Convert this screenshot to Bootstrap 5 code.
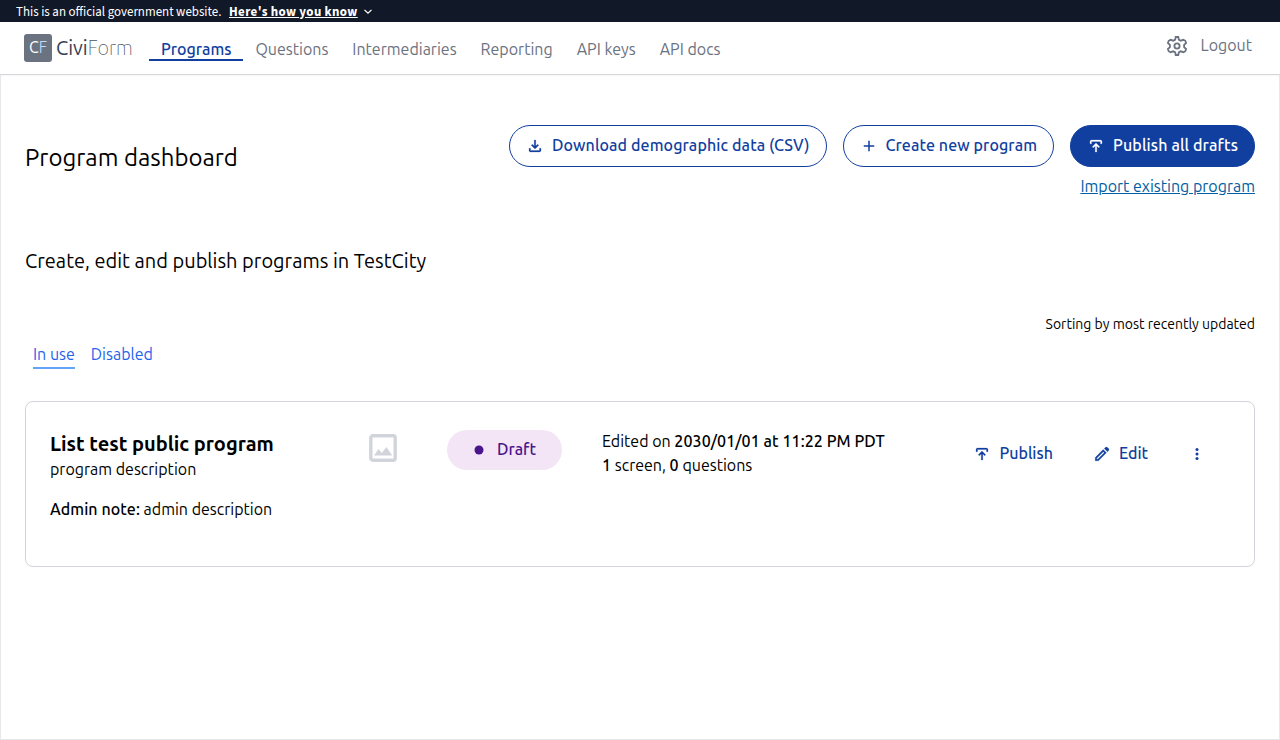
<!DOCTYPE html>
<html lang="en">
<head>
<meta charset="utf-8">
<meta name="viewport" content="width=device-width, initial-scale=1">
<title>CiviForm - Program dashboard</title>
<link rel="stylesheet" href="https://cdn.jsdelivr.net/npm/bootstrap@5.3.0/dist/css/bootstrap.min.css">
<style>
  body { font-family: Ubuntu, "Noto Sans", sans-serif; font-size: 16px; line-height: 24px; color: #000; min-height: 740px; }
  svg { display: block; flex: none; }
  .gov-banner { height: 22px; padding-top: 2px; background: #111827; color: #fff; font: 12.95px/21px "Source Sans 3", "Noto Sans", sans-serif; }
  .gov-banner a { color: #fff; font-weight: 700; letter-spacing: .38px; text-underline-offset: 1px; margin-left: 7.6px; }
  .site-header { height: 52px; box-shadow: 0 1px 2px rgba(0,0,0,.1); position: relative; }
  .brand-mark { width: 28px; height: 28px; border-radius: 3px; background: #6b7280; color: #fff; font-size: 16px; font-weight: 400; line-height: 27px; }
  .brand-mark span { color: #bfdbfe; font-weight: 300; }
  .brand-name { font-size: 20px; font-weight: 400; line-height: 28px; color: #374151; }
  .brand-name span { color: #4b5563; font-weight: 100; letter-spacing: -.1px; }
  .site-nav { margin-left: 16.3px; }
  .site-nav .nav-link { padding: 0 12px; height: 23px; line-height: 22px; color: #6b7280; border-bottom: 2px solid transparent; }
  .site-nav .nav-link.active { color: #113f9f; font-weight: 500; border-color: #113f9f; }
  .gear { margin-top: 12px; }
  .logout { color: #6b7280; margin-top: 11px; }
  main { border: 1px solid #e5e7eb; padding: 50px 24px 0; }
  .pill { height: 42px; padding: 0 16px 2px; border: 1px solid #113f9f; border-radius: 21px; color: #113f9f; font-weight: 500; letter-spacing: .1px; line-height: 24px; gap: 8px; }
  .pill:hover { background: #e5edff; color: #113f9f; }
  .pill.create { letter-spacing: .08px; }
  .pill.filled { background: #113f9f; color: #fff; letter-spacing: .13px; }
  .pill svg { margin-top: 2px; }
  h1 { font-size: 24px; line-height: 32px; font-weight: 400; margin-top: 17px; }
  .import-link { color: #005ea2; margin-top: 7px; }
  .lead-in { font-size: 20px; line-height: 28px; margin-top: 49px; }
  .sorting { font-size: 14px; line-height: 20px; margin-top: 39px; }
  .tabs { margin-top: 8px; }
  .tab-link { color: #2563eb; text-decoration: none; height: 27px; border-bottom: 2px solid transparent; }
  .tab-link.active { border-color: #60a5fa; }
  .program-card { height: 166px; margin-top: 32px; border: 1px solid #d1d5db; border-radius: 8px; padding: 0 24px; }
  .program-info { width: 318px; padding-top: 28px; }
  .program-info h2 { font-size: 20px; line-height: 28px; font-weight: 600; margin-bottom: -1px; }
  .strong { font-weight: 500; letter-spacing: .07px; }
  .thumb { margin: 32px 0 0 1px; }
  .draft-pill { width: 115px; height: 40px; margin: 28px 0 0 50px; border-radius: 20px; background: #f3e5f5; color: #4a148c; gap: 13px; padding: 0 0 2px 27px; font-weight: 500; }
  .draft-pill svg { margin-top: 2px; }
  .edited { width: 371px; margin-left: 40px; padding-top: 27px; }
  .row-action { color: #113f9f; font-weight: 500; text-decoration: none; gap: 8.4px; height: 24px; margin-top: 39px; }
  .row-action svg { margin-top: 1px; }
  .row-action + .row-action { margin-left: 39.6px; }
</style>
</head>
<body class="d-flex flex-column">
<div class="gov-banner d-flex align-items-center px-3">
  <span>This is an official government website.</span>
  <a href="#">Here's how you know</a>
  <svg class="ms-1" width="12" height="12" viewBox="0 0 12 12" fill="none" stroke="#fff" stroke-width="1.3"><path d="M2.5 3.9 6 7.2l3.5-3.3"/></svg>
</div>
<header class="site-header d-flex bg-white">
  <a href="#" class="d-flex text-decoration-none ms-4 mt-2 pt-1">
    <span class="brand-mark text-center">C<span>F</span></span>
    <span class="brand-name ms-1">Civi<span>Form</span></span>
  </a>
  <nav class="site-nav nav mt-3">
    <a class="nav-link active" href="#">Programs</a>
    <a class="nav-link" href="#">Questions</a>
    <a class="nav-link" href="#">Intermediaries</a>
    <a class="nav-link" href="#">Reporting</a>
    <a class="nav-link" href="#">API keys</a>
    <a class="nav-link" href="#">API docs</a>
  </nav>
  <div class="d-flex align-items-start ms-auto pe-4 me-1">
    <svg class="gear" width="24" height="24" viewBox="0 0 24 24" fill="none" stroke="#6b7280" stroke-width="1.8" stroke-linejoin="miter"><path d="M10.2 5.6 10.7 3h2.6l.5 2.6 1.9 1.1 2.7-.9 1.9 1 .8 2.2-2 1.9v2.2l2 1.9-.8 2.2-1.9 1-2.7-.9-1.9 1.1-.5 2.6h-2.6l-.5-2.6-1.9-1.1-2.7.9-1.9-1-.8-2.2 2-1.9v-2.2l-2-1.9.8-2.2 1.9-1 2.7.9Z"/><circle cx="12" cy="12" r="2.6"/></svg>
    <a href="#" class="logout text-decoration-none ps-1 ms-2">Logout</a>
  </div>
</header>
<main class="flex-grow-1">
  <div class="d-flex">
    <h1 class="mb-0 me-auto">Program dashboard</h1>
    <div class="d-flex flex-column align-items-end">
      <div class="d-flex gap-3">
        <button class="btn pill d-flex align-items-center"><svg width="18" height="18" viewBox="0 0 24 24" fill="currentColor"><path d="M12 16 7 11l1.4-1.45L11 12.15V4h2v8.15l2.6-2.6L17 11ZM6 20q-.82 0-1.41-.59T4 18v-3h2v3h12v-3h2v3q0 .82-.59 1.41T18 20Z" stroke="currentColor" stroke-width=".3"/></svg>Download demographic data (CSV)</button>
        <button class="btn pill create d-flex align-items-center"><svg width="18" height="18" viewBox="0 0 24 24" fill="currentColor"><path d="M19 13h-6v6h-2v-6H5v-2h6V5h2v6h6v2Z"/></svg>Create new program</button>
        <button class="btn pill filled d-flex align-items-center"><svg width="18" height="18" viewBox="0 0 24 24" fill="currentColor"><path d="M11 20v-8.15l-2.6 2.6L7 13l5-5 5 5-1.4 1.45-2.6-2.6V20ZM4 9V6q0-.82.59-1.41T6 4h12q.82 0 1.41.59T20 6v3h-2V6H6v3Z" stroke="currentColor" stroke-width=".3"/></svg>Publish all drafts</button>
      </div>
      <a href="#" class="import-link">Import existing program</a>
    </div>
  </div>
  <p class="lead-in mb-0">Create, edit and publish programs in TestCity</p>
  <p class="sorting mb-0 text-end">Sorting by most recently updated</p>
  <div class="tabs d-flex gap-3 ps-2">
    <a href="#" class="tab-link active">In use</a>
    <a href="#" class="tab-link">Disabled</a>
  </div>
  <section class="program-card d-flex align-items-start">
    <div class="program-info">
      <h2>List test public program</h2>
      <p class="mb-3">program description</p>
      <p class="mb-0"><span class="strong">Admin note:</span> admin description</p>
    </div>
    <svg class="thumb" width="28" height="28" viewBox="0 0 28 28"><rect x="1.8" y="1.8" width="24.4" height="24.4" rx="2" fill="none" stroke="#d1d5db" stroke-width="3.4"/><path d="m5 21.5 4.5-6.5 3.3 4.1 4.6-6.1 5.9 8.5Z" fill="#d1d5db"/></svg>
    <div class="draft-pill d-flex align-items-center"><svg width="10" height="10"><circle cx="5" cy="5" r="4.5" fill="#4a148c"/></svg>Draft</div>
    <div class="edited">Edited on <span class="strong">2030/01/01 at 11:22 PM PDT</span><br><span class="strong">1</span> screen, <span class="strong">0</span> questions</div>
    <a href="#" class="row-action d-flex align-items-center"><svg width="18" height="18" viewBox="0 0 24 24" fill="currentColor"><path d="M11 20v-8.15l-2.6 2.6L7 13l5-5 5 5-1.4 1.45-2.6-2.6V20ZM4 9V6q0-.82.59-1.41T6 4h12q.82 0 1.41.59T20 6v3h-2V6H6v3Z" stroke="currentColor" stroke-width=".3"/></svg>Publish</a>
    <a href="#" class="row-action d-flex align-items-center"><svg width="18" height="18" viewBox="0 0 24 24" fill="currentColor"><path d="M5 19h1.4l8.63-8.63-1.4-1.4L5 17.6ZM19.3 8.93l-4.25-4.2 1.4-1.4q.58-.58 1.41-.58t1.41.58l1.4 1.4q.58.58.6 1.39t-.55 1.38ZM17.85 10.4 7.25 21H3v-4.25l10.6-10.6Z" stroke="currentColor" stroke-width=".4"/></svg>Edit</a>
    <a href="#" class="row-action d-flex align-items-center" aria-label="More actions"><svg width="18" height="18" viewBox="0 0 24 24" fill="currentColor"><circle cx="12" cy="6" r="2"/><circle cx="12" cy="12" r="2"/><circle cx="12" cy="18" r="2"/></svg></a>
  </section>
</main>
<script src="https://cdn.jsdelivr.net/npm/bootstrap@5.3.0/dist/js/bootstrap.bundle.min.js"></script>
</body>
</html>
